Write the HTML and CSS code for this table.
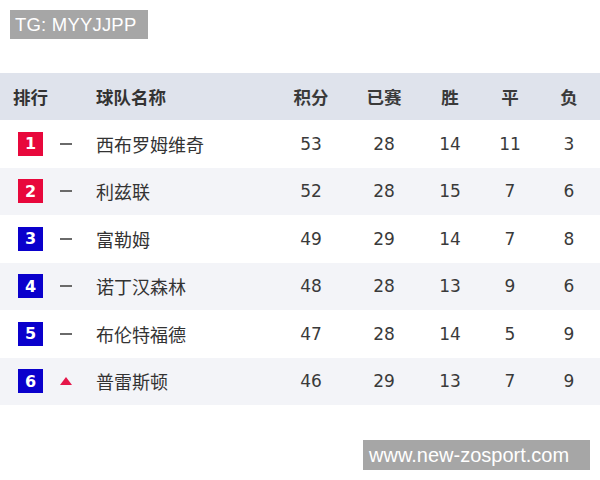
FILE: index.html
```html
<!DOCTYPE html>
<html lang="zh">
<head>
<meta charset="utf-8">
<link rel="stylesheet" href="styles.css">
</head>
<body>
<div class="tag tag-top">TG: MYYJJPP</div>
<div class="table">
  <div class="row head">
    <div class="rank">排行</div>
    <div class="name">球队名称</div>
    <div class="num">积分</div>
    <div class="num">已赛</div>
    <div class="num">胜</div>
    <div class="num">平</div>
    <div class="num">负</div>
  </div>
  <div class="row">
    <div class="rank"><span class="badge red">1</span><span class="flat"></span></div>
    <div class="name">西布罗姆维奇</div>
    <div class="num">53</div><div class="num">28</div><div class="num">14</div><div class="num">11</div><div class="num">3</div>
  </div>
  <div class="row alt">
    <div class="rank"><span class="badge red">2</span><span class="flat"></span></div>
    <div class="name">利兹联</div>
    <div class="num">52</div><div class="num">28</div><div class="num">15</div><div class="num">7</div><div class="num">6</div>
  </div>
  <div class="row">
    <div class="rank"><span class="badge blue">3</span><span class="flat"></span></div>
    <div class="name">富勒姆</div>
    <div class="num">49</div><div class="num">29</div><div class="num">14</div><div class="num">7</div><div class="num">8</div>
  </div>
  <div class="row alt">
    <div class="rank"><span class="badge blue">4</span><span class="flat"></span></div>
    <div class="name">诺丁汉森林</div>
    <div class="num">48</div><div class="num">28</div><div class="num">13</div><div class="num">9</div><div class="num">6</div>
  </div>
  <div class="row">
    <div class="rank"><span class="badge blue">5</span><span class="flat"></span></div>
    <div class="name">布伦特福德</div>
    <div class="num">47</div><div class="num">28</div><div class="num">14</div><div class="num">5</div><div class="num">9</div>
  </div>
  <div class="row alt">
    <div class="rank"><span class="badge blue">6</span><span class="up"></span></div>
    <div class="name">普雷斯顿</div>
    <div class="num">46</div><div class="num">29</div><div class="num">13</div><div class="num">7</div><div class="num">9</div>
  </div>
</div>
<div class="tag tag-bottom">www.new-zosport.com</div>
</body>
</html>
```
FILE: styles.css
```css
html, body {
  margin: 0;
  padding: 0;
  background: #ffffff;
  width: 600px;
  height: 480px;
  overflow: hidden;
  font-family: "Noto Sans CJK SC", "DejaVu Sans", sans-serif;
  color: #333333;
}
.tag {
  position: absolute;
  background: #a6a6a6;
  color: #ffffff;
  font-family: "Liberation Sans", Arial, sans-serif;
  font-size: 18.5px;
  line-height: 29px;
  height: 29px;
  box-sizing: border-box;
  white-space: nowrap;
}
.tag-top {
  left: 10px;
  top: 10px;
  width: 138px;
  padding-left: 5px;
  letter-spacing: 0.2px;
}
.tag-bottom {
  left: 363px;
  top: 440px;
  width: 227px;
  height: 30px;
  line-height: 30px;
  padding-left: 6px;
  font-size: 20px;
}
.table {
  margin-top: 73px;
  width: 600px;
}
.row {
  display: grid;
  grid-template-columns: 83px 178px 74px 72px 60px 60px 58px;
  align-items: center;
  height: 47.5px;
  padding-left: 13px;
  font-size: 17px;
  background: #ffffff;
}
.row.alt {
  background: #f3f4f8;
}
.row.head {
  height: 47px;
  background: #dfe3ec;
  font-weight: bold;
  font-size: 17px;
  color: #333333;
}
.head .name, .head .rank { font-size: 17.5px; }
.name {
  font-size: 18px;
  color: #333333;
}
.num {
  text-align: center;
  font-family: "DejaVu Sans", Verdana, sans-serif;
  font-size: 17px;
  color: #3a3a3a;
}
.head .num {
  font-family: "Noto Sans CJK SC", sans-serif;
  font-size: 17.5px;
}
.rank {
  display: flex;
  align-items: center;
}
.badge {
  width: 25px;
  height: 24px;
  margin-left: 5px;
  display: flex;
  align-items: center;
  justify-content: center;
  color: #ffffff;
  font-family: "DejaVu Sans", sans-serif;
  font-weight: bold;
  font-size: 16px;
}
.badge.red { background: #e8083c; }
.badge.blue { background: #0a00cc; }
.flat {
  width: 12px;
  height: 2px;
  background: #6a6a6a;
  margin-left: 17px;
}
.up {
  width: 0;
  height: 0;
  margin-left: 17px;
  border-left: 6px solid transparent;
  border-right: 6px solid transparent;
  border-bottom: 8px solid #e5174a;
}
```
